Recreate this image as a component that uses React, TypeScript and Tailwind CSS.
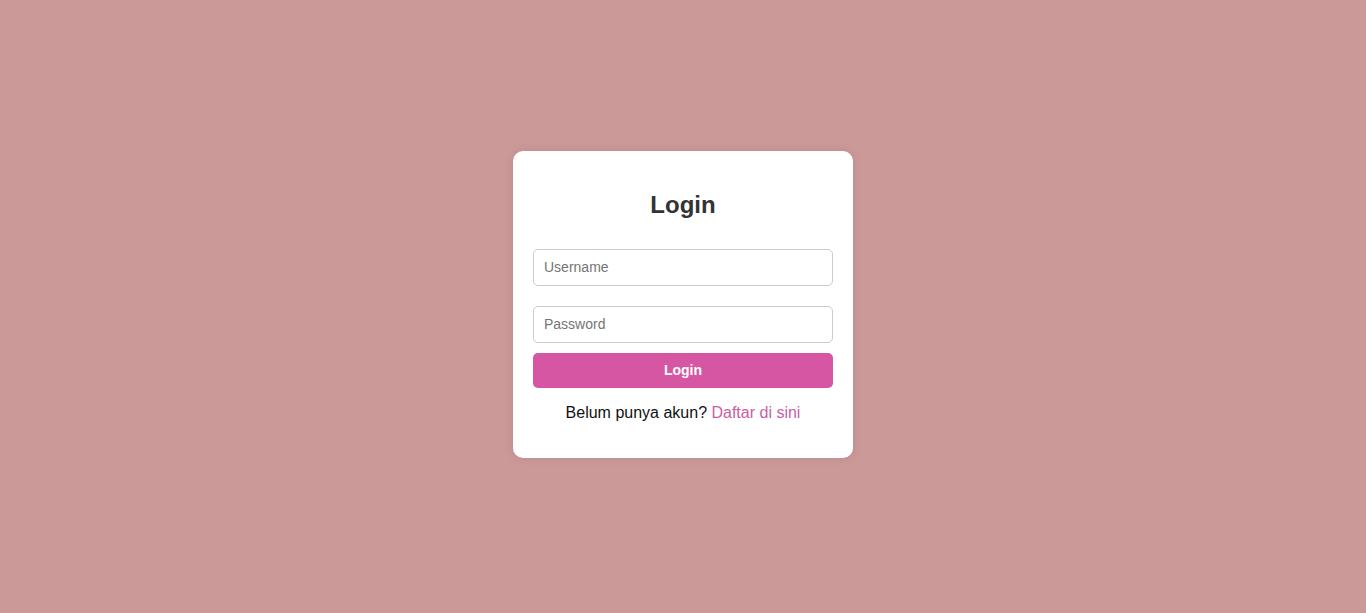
export default function App() {
    return (
        <div className="min-h-screen w-full bg-[#cc9999] flex items-center justify-center pb-[5px] font-['Liberation_Sans',Arial,sans-serif]">
            <div className="w-[340px] bg-white rounded-[10px] px-5 py-5 shadow-[0_0_10px_rgba(0,0,0,0.1)] text-center">
                <h2 className="text-[24px] leading-[28px] font-bold text-[#333] mt-[20px] mb-[20px]">Login</h2>
                <form className="flex flex-col" onSubmit={(e) => e.preventDefault()}>
                    <input
                        type="text"
                        placeholder="Username"
                        className="w-full h-[37px] my-[10px] px-[10px] text-[14px] text-[#333] placeholder:text-[#757575] border border-[#ccc] rounded-[5px] outline-none"
                    />
                    <input
                        type="password"
                        placeholder="Password"
                        className="w-full h-[37px] my-[10px] px-[10px] text-[14px] text-[#333] placeholder:text-[#757575] border border-[#ccc] rounded-[5px] outline-none"
                    />
                    <button
                        type="submit"
                        className="w-full h-[35px] bg-[#d656a3] text-white text-[14px] font-bold rounded-[5px] cursor-pointer"
                    >
                        Login
                    </button>
                </form>
                <p className="my-4 text-[16px] leading-[18px] text-[#111]">
                    Belum punya akun? <a href="#" className="text-[#c95ea0]">Daftar di sini</a>
                </p>
            </div>
        </div>
    );
}
